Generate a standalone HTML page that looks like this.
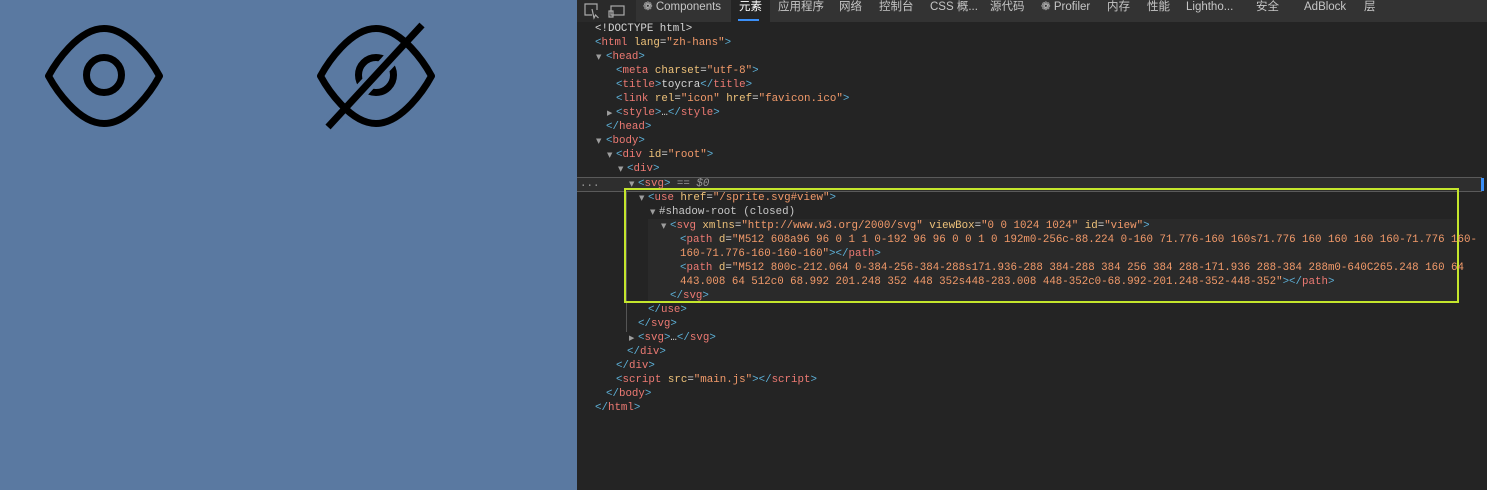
<!DOCTYPE html>
<html><head><meta charset="utf-8"><style>
*{margin:0;padding:0;box-sizing:border-box}
body{width:1487px;height:490px;overflow:hidden;position:relative;background:#242424;font-family:"Liberation Sans","Noto Sans CJK SC",sans-serif}
#left{position:absolute;left:0;top:0;width:577px;height:490px;background:#5a79a1}
#tb{position:absolute;left:577px;top:0;width:910px;height:22px;background:#333}
#tbl{position:absolute;left:577px;top:0;width:59px;height:22px;background:#2a2a2a}
.tab{position:absolute;top:0;height:22px;line-height:15px;font-size:11.5px;color:#c6c6c6;white-space:nowrap}
.l{position:absolute;height:14px;line-height:14px;font-family:"Liberation Mono",monospace;font-size:10.8px;white-space:pre;color:#d5d5d5}
.b{color:#5db0d7}.t{color:#ed7a73}.a{color:#eec27a}.v{color:#f29a6a}.g{color:#9a9a9a}
.tri{position:absolute;font-size:7px;color:#9d9d9d;font-family:"DejaVu Sans",sans-serif;line-height:14px;height:14px}
</style></head><body>
<div id="left">
<svg width="577" height="150" style="position:absolute;left:0;top:0">
<g fill="none" stroke="#000" stroke-width="7" stroke-linejoin="round">
<path d="M48.5,76 C55,64 78,28.5 104,28.5 C130,28.5 153,64 159.5,76 C153,88 130,123.5 104,123.5 C78,123.5 55,88 48.5,76Z"/>
<circle cx="104" cy="75" r="17.5"/>
<circle cx="376" cy="75" r="17.5"/>
<line x1="328" y1="127" x2="422" y2="25" stroke="#5a79a1" stroke-width="15"/>
<line x1="328" y1="127" x2="422" y2="25"/>
<path d="M320.5,76 C327,64 350,28.5 376,28.5 C402,28.5 425,64 431.5,76 C425,88 402,123.5 376,123.5 C350,123.5 327,88 320.5,76Z"/>
</g></svg>
</div>
<div id="tb"></div><div id="tbl"></div>
<svg style="position:absolute;left:583px;top:2px" width="50" height="18"><g fill="none" stroke="#aaa" stroke-width="1.2"><path d="M9,13H2V2h12v6"/><path d="M9,7l2,9 1.5-3 3 3"/><rect x="28" y="4" width="13" height="9"/><path d="M26,9h4v6h-4z"/></g></svg>
<div style="position:absolute;left:731px;top:0;width:39px;height:22px;background:#242424"></div>
<div style="position:absolute;left:738px;top:19px;width:21px;height:2px;background:#3b8ff7"></div>
<div class="tab" style="left:643px">❁ Components</div>
<div class="tab" style="left:739px;color:#fff">元素</div>
<div class="tab" style="left:778px">应用程序</div>
<div class="tab" style="left:839px">网络</div>
<div class="tab" style="left:879px">控制台</div>
<div class="tab" style="left:930px">CSS 概...</div>
<div class="tab" style="left:990px">源代码</div>
<div class="tab" style="left:1041px">❁ Profiler</div>
<div class="tab" style="left:1107px">内存</div>
<div class="tab" style="left:1147px">性能</div>
<div class="tab" style="left:1186px">Lightho...</div>
<div class="tab" style="left:1256px">安全</div>
<div class="tab" style="left:1304px">AdBlock</div>
<div class="tab" style="left:1364px">层</div>
<div style="position:absolute;left:648px;top:219px;width:810px;height:84px;background:#2a2a2a"></div>
<div style="position:absolute;left:577px;top:177px;width:905px;height:15px;background:#2e2e2e;border-top:1px solid #5a5a5a;border-bottom:1px solid #5a5a5a"></div>
<div style="position:absolute;left:1481px;top:178px;width:3px;height:13px;background:#3b8ff7"></div>
<div style="position:absolute;left:626px;top:192px;width:1px;height:140px;background:#555"></div>
<div style="position:absolute;left:624px;top:188px;width:835px;height:115px;border:2px solid #c4e62c"></div>
<div class="l g" style="left:580px;top:177px">...</div>

<div class="l" style="left:595px;top:22px">&lt;!DOCTYPE html&gt;</div>
<div class="l" style="left:595px;top:36px"><span class="b">&lt;</span><span class="t">html</span> <span class="a">lang</span>=<span class="v">"zh-hans"</span><span class="b">&gt;</span></div>
<div class="tri" style="left:596px;top:50px">▼</div>
<div class="l" style="left:606px;top:50px"><span class="b">&lt;</span><span class="t">head</span><span class="b">&gt;</span></div>
<div class="l" style="left:616px;top:64px"><span class="b">&lt;</span><span class="t">meta</span> <span class="a">charset</span>=<span class="v">"utf-8"</span><span class="b">&gt;</span></div>
<div class="l" style="left:616px;top:78px"><span class="b">&lt;</span><span class="t">title</span><span class="b">&gt;</span>toycra<span class="b">&lt;/</span><span class="t">title</span><span class="b">&gt;</span></div>
<div class="l" style="left:616px;top:92px"><span class="b">&lt;</span><span class="t">link</span> <span class="a">rel</span>=<span class="v">"icon"</span> <span class="a">href</span>=<span class="v">"favicon.ico"</span><span class="b">&gt;</span></div>
<div class="tri" style="left:607px;top:106px">▶</div>
<div class="l" style="left:616px;top:106px"><span class="b">&lt;</span><span class="t">style</span><span class="b">&gt;</span>…<span class="b">&lt;/</span><span class="t">style</span><span class="b">&gt;</span></div>
<div class="l" style="left:606px;top:120px"><span class="b">&lt;/</span><span class="t">head</span><span class="b">&gt;</span></div>
<div class="tri" style="left:596px;top:134px">▼</div>
<div class="l" style="left:606px;top:134px"><span class="b">&lt;</span><span class="t">body</span><span class="b">&gt;</span></div>
<div class="tri" style="left:607px;top:148px">▼</div>
<div class="l" style="left:616px;top:148px"><span class="b">&lt;</span><span class="t">div</span> <span class="a">id</span>=<span class="v">"root"</span><span class="b">&gt;</span></div>
<div class="tri" style="left:618px;top:162px">▼</div>
<div class="l" style="left:627px;top:162px"><span class="b">&lt;</span><span class="t">div</span><span class="b">&gt;</span></div>
<div class="tri" style="left:629px;top:177px">▼</div>
<div class="l" style="left:638px;top:177px"><span class="b">&lt;</span><span class="t">svg</span><span class="b">&gt;</span> <span class="g">== <i>$0</i></span></div>
<div class="tri" style="left:639px;top:191px">▼</div>
<div class="l" style="left:648px;top:191px"><span class="b">&lt;</span><span class="t">use</span> <span class="a">href</span>=<span class="v">"/sprite.svg#view"</span><span class="b">&gt;</span></div>
<div class="tri" style="left:650px;top:205px">▼</div>
<div class="l" style="left:659px;top:205px;color:#c8c8c8">#shadow-root (closed)</div>
<div class="tri" style="left:661px;top:219px">▼</div>
<div class="l" style="left:670px;top:219px"><span class="b">&lt;</span><span class="t">svg</span> <span class="a">xmlns</span>=<span class="v">"http://www.w3.org/2000/svg"</span> <span class="a">viewBox</span>=<span class="v">"0 0 1024 1024"</span> <span class="a">id</span>=<span class="v">"view"</span><span class="b">&gt;</span></div>
<div class="l" style="left:680px;top:233px"><span class="b">&lt;</span><span class="t">path</span> <span class="a">d</span>=<span class="v">"M512 608a96 96 0 1 1 0-192 96 96 0 0 1 0 192m0-256c-88.224 0-160 71.776-160 160s71.776 160 160 160 160-71.776 160-</span></div>
<div class="l" style="left:680px;top:247px"><span class="v">160-71.776-160-160-160"</span><span class="b">&gt;&lt;/</span><span class="t">path</span><span class="b">&gt;</span></div>
<div class="l" style="left:680px;top:261px"><span class="b">&lt;</span><span class="t">path</span> <span class="a">d</span>=<span class="v">"M512 800c-212.064 0-384-256-384-288s171.936-288 384-288 384 256 384 288-171.936 288-384 288m0-640C265.248 160 64</span></div>
<div class="l" style="left:680px;top:275px"><span class="v">443.008 64 512c0 68.992 201.248 352 448 352s448-283.008 448-352c0-68.992-201.248-352-448-352"</span><span class="b">&gt;&lt;/</span><span class="t">path</span><span class="b">&gt;</span></div>
<div class="l" style="left:670px;top:289px"><span class="b">&lt;/</span><span class="t">svg</span><span class="b">&gt;</span></div>
<div class="l" style="left:648px;top:303px"><span class="b">&lt;/</span><span class="t">use</span><span class="b">&gt;</span></div>
<div class="l" style="left:638px;top:317px"><span class="b">&lt;/</span><span class="t">svg</span><span class="b">&gt;</span></div>
<div class="tri" style="left:629px;top:331px">▶</div>
<div class="l" style="left:638px;top:331px"><span class="b">&lt;</span><span class="t">svg</span><span class="b">&gt;</span>…<span class="b">&lt;/</span><span class="t">svg</span><span class="b">&gt;</span></div>
<div class="l" style="left:627px;top:345px"><span class="b">&lt;/</span><span class="t">div</span><span class="b">&gt;</span></div>
<div class="l" style="left:616px;top:359px"><span class="b">&lt;/</span><span class="t">div</span><span class="b">&gt;</span></div>
<div class="l" style="left:616px;top:373px"><span class="b">&lt;</span><span class="t">script</span> <span class="a">src</span>=<span class="v">"main.js"</span><span class="b">&gt;&lt;/</span><span class="t">script</span><span class="b">&gt;</span></div>
<div class="l" style="left:606px;top:387px"><span class="b">&lt;/</span><span class="t">body</span><span class="b">&gt;</span></div>
<div class="l" style="left:595px;top:401px"><span class="b">&lt;/</span><span class="t">html</span><span class="b">&gt;</span></div>
</body></html>
